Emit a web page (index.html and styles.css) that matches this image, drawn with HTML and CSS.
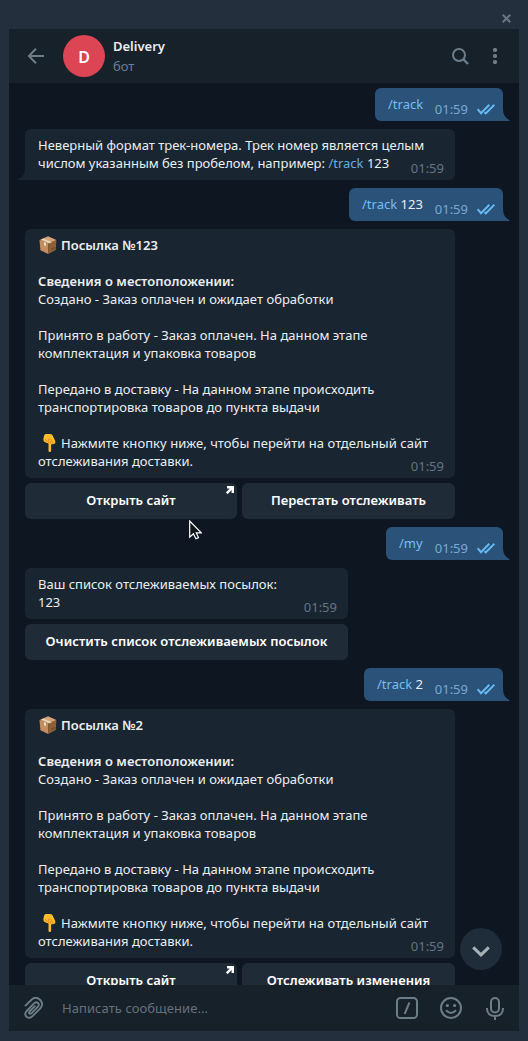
FILE: index.html
```html
<!DOCTYPE html>
<html lang="ru">
<head>
<meta charset="utf-8">
<title>Delivery</title>
<link rel="stylesheet" href="styles.css">
</head>
<body>
<svg class="defs" width="0" height="0">
  <symbol id="checks" viewBox="0 0 18 11"><path d="M.6 5.2 4 9.2 12.3.8M7.4 8.2l1.4 1.2L17.4.8" fill="none" stroke="#65b9f4" stroke-width="2"/></symbol>
  <symbol id="tail" viewBox="0 0 7 12"><path d="M0 0Q0 8 6.6 11.3V12H0z"/></symbol>
  <symbol id="box" viewBox="0 0 18 18">
    <path d="M.5 4 9.2 7.2V18L1.4 14.2z" fill="#c28e60"/><path d="M17.4 4 9.2 7.2V18l7.6-4z" fill="#8e6035"/>
    <path d="M.5 4 9 .3l8.4 3.6-8.2 3.6z" fill="#d3a577"/><path d="m4.3 2.4 8.4 3.8-2.2 1L2.4 3.2z" fill="#e9d5bd"/>
    <path d="m5 6 2 .8v3.4L5 9.2z" fill="#ead8c1"/><path d="m12.8 12.5 1-.5v1.6l-1 .5zm2-1 .9-.4v1.5l-.9.5z" fill="#513822"/>
  </symbol>
  <symbol id="hand" viewBox="0 0 13 18">
    <path d="M1.2 1.2Q1.6 0 3.4 0h3.8q2 0 2.7 2l2.1 4.5q1 3-.9 3.4l-2.2.4-.8.2V16.4q0 1.6-1.3 1.6t-1.3-1.6V9.4L2 8.2Q0 7.5.4 5z" fill="#fdbd2b"/>
    <path d="M5.3 9.4V5.2q1.4-.9 2.7.2l2.3 4.5M8 10.5 7 6.8M3.2 8.2 2.5 5" fill="none" stroke="#dd8516" stroke-width=".8"/>
  </symbol>
  <symbol id="link" viewBox="0 0 8 8"><path d="M1 1.2H6.8V7M6.8 1.2.8 7.2" fill="none" stroke="#fff" stroke-width="2.4"/></symbol>
</svg>
<div class="titlebar"><svg width="9" height="9" viewBox="0 0 9 9"><path d="m.7.7 7.6 7.6m0-7.6L.7 8.3" stroke="#697682" stroke-width="2"/></svg></div>
<div class="window">
  <header class="header">
    <svg class="back" width="16" height="16" viewBox="0 0 16 16"><path d="M8 .8.9 8 8 15.2M1 8h15" fill="none" stroke="#6d7d88" stroke-width="2"/></svg>
    <div class="avatar">D</div>
    <div class="peer"><div class="name">Delivery</div><div class="status">бот</div></div>
    <svg class="search" width="17" height="17" viewBox="0 0 17 17"><circle cx="7" cy="7" r="6" fill="none" stroke="#6d7d88" stroke-width="2"/><path d="m11.2 11.2 4.8 4.8" stroke="#6d7d88" stroke-width="2.4"/></svg>
    <svg class="more" width="4" height="16" viewBox="0 0 4 16" fill="#6d7d88"><circle cx="2" cy="2" r="2.1"/><circle cx="2" cy="8" r="2.1"/><circle cx="2" cy="14" r="2.1"/></svg>
  </header>
  <main class="chat">
    <div class="msg out w-track"><span class="cmd">/track</span><span class="time">01:59<svg class="checks"><use href="#checks"/></svg></span><svg class="tail"><use href="#tail"/></svg></div>
    <div class="msg in">Неверный формат трек-номера. Трек номер является целым<br>числом указанным без пробелом, например: <span class="link">/track</span> 123<span class="time">01:59</span><svg class="tail"><use href="#tail"/></svg></div>
    <div class="msg out w-123"><span class="cmd">/track</span> 123<span class="time">01:59<svg class="checks"><use href="#checks"/></svg></span><svg class="tail"><use href="#tail"/></svg></div>
    <div class="group">
      <div class="msg in"><svg class="emoji"><use href="#box"/></svg><b>Посылка №123</b><br><br><b class="wide">Сведения о местоположении:</b><br><span class="wide">Создано - Заказ оплачен и ожидает обработки<br><br>Принято в работу - Заказ оплачен. На данном этапе<br>комплектация и упаковка товаров<br><br>Передано в доставку - На данном этапе происходить<br>транспортировка товаров до пункта выдачи</span><br><br><svg class="emoji hand"><use href="#hand"/></svg><span class="wider">Нажмите кнопку ниже, чтобы перейти на отдельный сайт</span><br>отслеживания доставки.<span class="time">01:59</span></div>
      <div class="buttons"><div class="button">Открыть сайт<svg class="ext"><use href="#link"/></svg></div><div class="button">Перестать отслеживать</div></div>
    </div>
    <div class="msg out w-my"><span class="cmd">/my</span><span class="time">01:59<svg class="checks"><use href="#checks"/></svg></span><svg class="tail"><use href="#tail"/></svg></div>
    <div class="group narrow">
      <div class="msg in">Ваш список отслеживаемых посылок:<br>123<span class="time">01:59</span></div>
      <div class="buttons single"><div class="button">Очистить список отслеживаемых посылок</div></div>
    </div>
    <div class="msg out w-2"><span class="cmd">/track</span> 2<span class="time">01:59<svg class="checks"><use href="#checks"/></svg></span><svg class="tail"><use href="#tail"/></svg></div>
    <div class="group">
      <div class="msg in"><svg class="emoji"><use href="#box"/></svg><b>Посылка №2</b><br><br><b class="wide">Сведения о местоположении:</b><br><span class="wide">Создано - Заказ оплачен и ожидает обработки<br><br>Принято в работу - Заказ оплачен. На данном этапе<br>комплектация и упаковка товаров<br><br>Передано в доставку - На данном этапе происходить<br>транспортировка товаров до пункта выдачи</span><br><br><svg class="emoji hand"><use href="#hand"/></svg><span class="wider">Нажмите кнопку ниже, чтобы перейти на отдельный сайт</span><br>отслеживания доставки.<span class="time">01:59</span></div>
      <div class="buttons"><div class="button">Открыть сайт<svg class="ext"><use href="#link"/></svg></div><div class="button">Отслеживать изменения</div></div>
    </div>
    <div class="down"><svg width="18" height="11" viewBox="0 0 18 11"><path d="m1.2 1.3 7.8 7.5 7.8-7.5" fill="none" stroke="#a8b0b8" stroke-width="3"/></svg></div>
  </main>
  <footer class="compose">
    <svg class="clip" width="20" height="22" viewBox="0 0 20 22"><path d="M1 9.2 7.2 3Q10.5-.5 14 1.3q5 2.8 3.8 7.5-.5 1.5-2 3l-7 7q-3 3-6 1.2-3-2.5-.2-6L10 6.4q2.2-2 4-.4 1.7 1.8-.2 3.8l-6.4 6.5q-1.2 1-2 .2-.9-.9.1-2L11.4 8.6" fill="none" stroke="#6d7d88" stroke-width="1.9"/></svg>
    <span class="placeholder">Написать сообщение...</span>
    <svg width="22" height="22" viewBox="0 0 22 22" fill="none" stroke="#6d7d88" stroke-width="2"><rect x="1" y="1" width="20" height="20" rx="3.6"/><path d="M13.4 5.5 8.7 16.8"/></svg>
    <svg class="smile" width="22" height="22" viewBox="0 0 22 22"><g fill="none" stroke="#6d7d88" stroke-width="2"><circle cx="11" cy="11" r="10"/><path d="M6 13.3q5 5.2 10 0"/></g><g fill="#6d7d88"><circle cx="7.4" cy="8.5" r="1.6"/><circle cx="14.6" cy="8.5" r="1.6"/></g></svg>
    <svg class="mic" width="18" height="23" viewBox="0 0 18 23" fill="none" stroke="#6d7d88" stroke-width="2"><rect x="5" y="1" width="8" height="14.4" rx="4"/><path d="M1 11v1q.5 7 8 7t8-7v-1M9 19v4"/></svg>
  </footer>
</div>
<svg class="cursor" width="13" height="20" viewBox="0 0 13 20"><path d="M.7 1v16.2l3.7-3.4 2.5 5 2.6-1.2-2.3-4.8h5.1z" fill="#10151a" stroke="#fff" stroke-width="1.2"/></svg>
</body>
</html>
```
FILE: styles.css
```css
* { box-sizing: border-box; }
body { margin: 0; width: 528px; height: 1041px; overflow: hidden; background: #242f3d; color: #ebeef0; font: 13px/18px "Noto Sans", sans-serif; white-space: nowrap; display: flex; flex-direction: column; }
svg { display: block; flex: none; }
.defs { position: absolute; }
.titlebar { height: 29px; padding: 14px 17px 0 0; display: flex; justify-content: flex-end; }
.window { width: 510px; height: 1002px; margin-left: 9px; display: flex; flex-direction: column; background: #0e1621; }
.header { height: 54px; flex: none; background: #17212a; display: flex; align-items: center; padding: 0 22px 0 19px; }
.avatar { width: 42px; height: 42px; margin-left: 19px; border-radius: 50%; background: #dc4553; color: #fff; display: flex; align-items: center; justify-content: center; font-size: 16px; font-weight: 600; padding-top: 1px; }
.peer { margin-left: 8px; flex: 1; display: grid; row-gap: 2px; }
.name, b { font-weight: 600; }
.status { color: #6b7f91; }
.more { margin-left: 24px; }
.chat { height: 902px; flex: none; overflow: hidden; position: relative; padding: 5px 16px 0; display: flex; flex-direction: column; gap: 8px; }
.msg { position: relative; padding: 7px 13px 8px; border-radius: 6px; }
.in { width: 430px; background: #192632; }
.out { height: 33px; align-self: flex-end; background: #2b5278; border-bottom-right-radius: 0; }
.w-track { width: 128px; }
.w-123 { width: 154px; }
.w-my { width: 117px; }
.w-2 { width: 139px; }
.wide { letter-spacing: .025px; }
.wider { letter-spacing: .05px; }
.cmd { color: #78bdf4; }
.link { color: #68abe5; }
.time { position: absolute; right: 11px; bottom: 3px; color: #657482; display: flex; align-items: center; }
.out .time { right: 8px; color: #7da8d3; }
.checks { width: 18px; height: 11px; margin-left: 9px; }
.tail { position: absolute; width: 7px; height: 12px; right: -7px; bottom: 0; fill: #2b5278; }
.in .tail { right: auto; left: -7px; transform: scaleX(-1); fill: #192632; }
.chat > .in { border-bottom-left-radius: 0; }
.group { width: 430px; display: flex; flex-direction: column; gap: 5px; }
.narrow { width: 323px; }
.group .in { width: 100%; }
.buttons { display: grid; grid-template-columns: 212px 213px; gap: 5px; }
.single { grid-template-columns: 1fr; }
.button { position: relative; height: 36px; padding-bottom: 2px; border-radius: 6px; background: #1f2c38; color: #fff; font-weight: 600; letter-spacing: .04px; display: flex; align-items: center; justify-content: center; }
.ext { position: absolute; width: 8px; height: 8px; top: 3px; right: 3px; }
.emoji { display: inline-block; width: 18px; height: 18px; vertical-align: top; margin: 0 4px 0 1px; }
.hand { width: 13px; margin: 0 5px; }
.down { position: absolute; left: 451px; top: 845px; width: 42px; height: 42px; border-radius: 50%; background: #1f2c3a; display: flex; align-items: center; justify-content: center; padding-top: 4px; }
.compose { height: 46px; flex: none; background: #17212a; display: flex; align-items: center; padding: 0 15px; }
.placeholder { margin-left: 18px; flex: 1; color: #64717d; letter-spacing: .06px; }
.smile { margin-left: 22px; }
.mic { margin-left: 24px; }
.cursor { position: absolute; left: 189px; top: 520px; }
```
